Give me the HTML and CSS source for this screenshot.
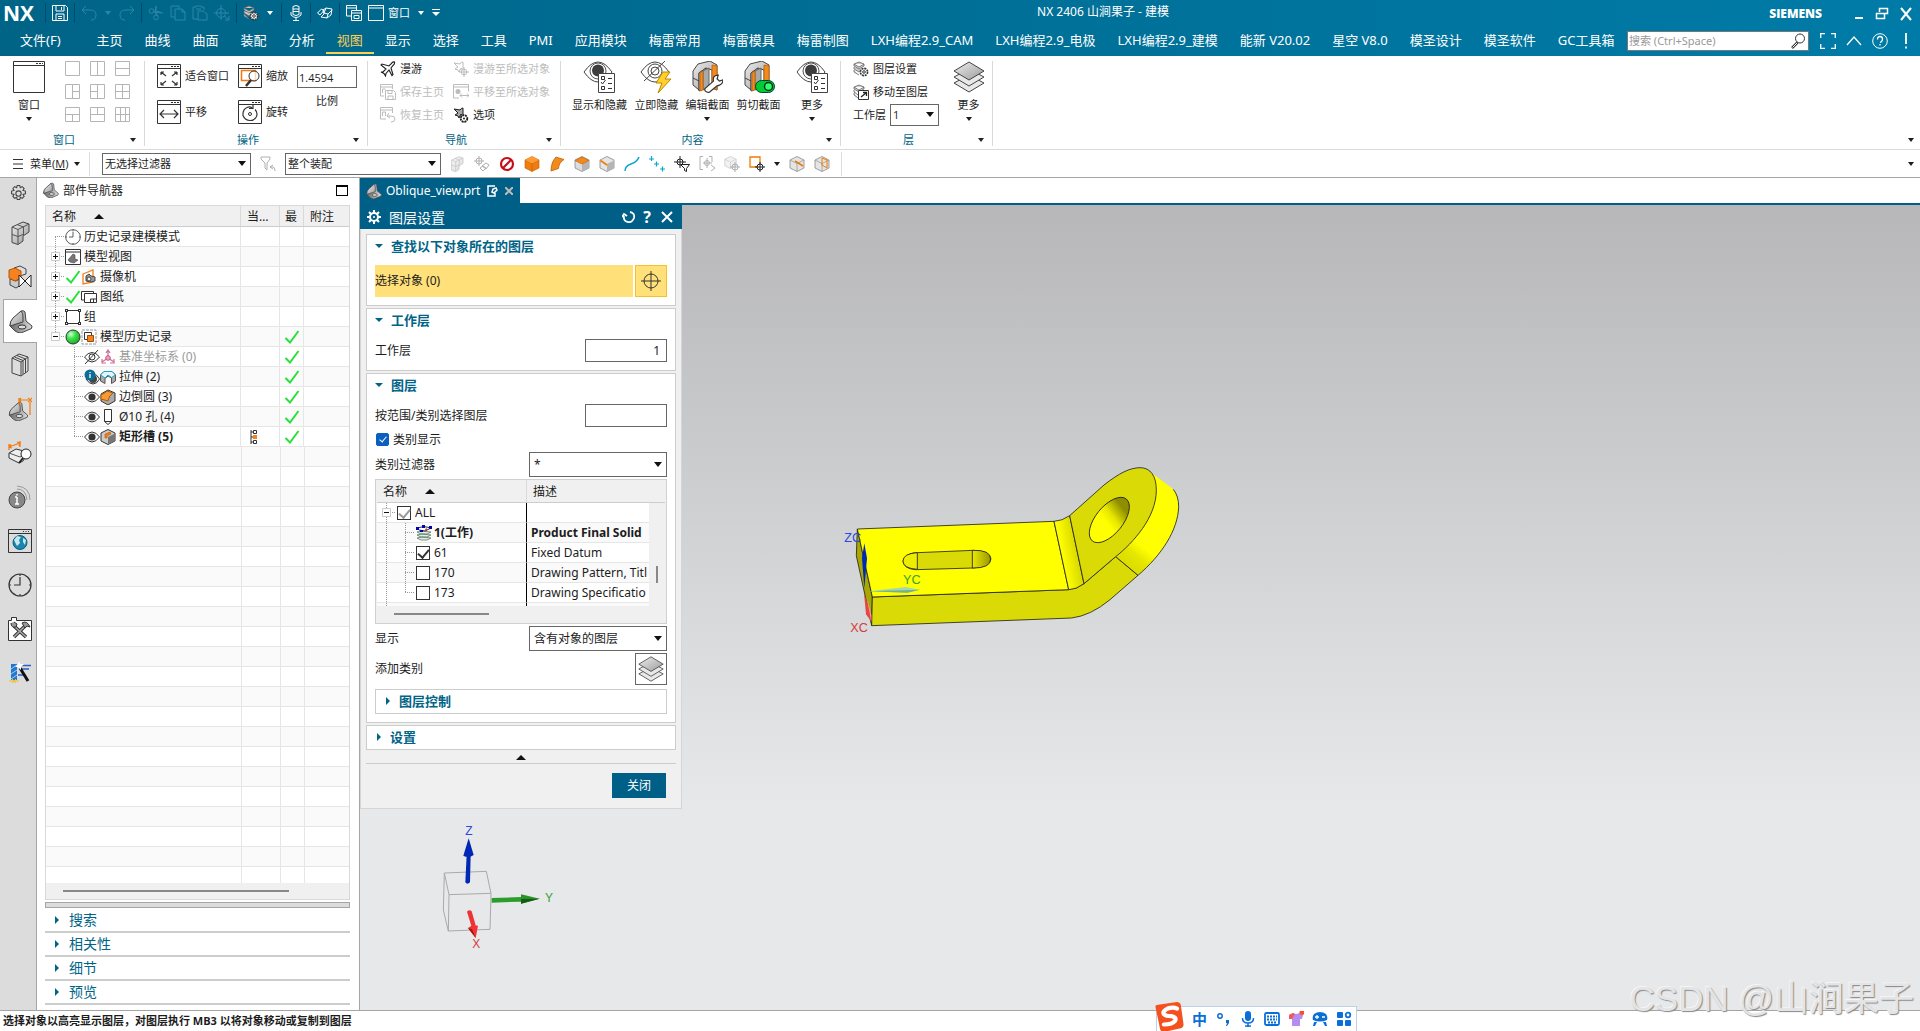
FILE: index.html
```html
<!DOCTYPE html>
<html lang="zh-CN">
<head>
<meta charset="utf-8">
<title>NX 2406 山涧果子 - 建模</title>
<link rel="stylesheet" href="styles.css">
</head>
<body>
<svg class="sprite" aria-hidden="true">
  <defs>
    <linearGradient id="gMetal" x1="0" y1="0" x2="1" y2="1"><stop offset="0" stop-color="#eee"/><stop offset="1" stop-color="#9a9a9a"/></linearGradient>
    <linearGradient id="gDark" x1="0" y1="0" x2="1" y2="0"><stop offset="0" stop-color="#666"/><stop offset="1" stop-color="#ddd"/></linearGradient>
    <radialGradient id="gGreen" cx=".35" cy=".3" r=".8"><stop offset="0" stop-color="#d6ffd6"/><stop offset=".4" stop-color="#3ee34a"/><stop offset="1" stop-color="#12a61d"/></radialGradient>
  </defs>
  <symbol id="save" viewBox="0 0 16 16"><path d="M.500.500h13l2 2v13H.500zM4 1v5h8V1M4 15V9h8v6M6 11.500h4M6 13.500h4M9.500 2v3" fill="none" stroke="currentColor"/></symbol>
  <symbol id="undo" viewBox="0 0 16 16"><path d="M5 1L1 5l4 4M1 5h8q6 0 6 5t-5 5" fill="none" stroke="currentColor"/></symbol>
  <symbol id="redo" viewBox="0 0 16 16"><path d="M11 1l4 4-4 4M15 5H7q-6 0-6 5t5 5" fill="none" stroke="currentColor"/></symbol>
  <symbol id="cut" viewBox="0 0 16 16"><g fill="none" stroke="currentColor"><circle cx="3.500" cy="6" r="2.300"/><circle cx="8" cy="12.500" r="2.300"/><path d="M5.500 7l9 1-6-2M8 10.500V1l-1 6 3 4"/></g></symbol>
  <symbol id="copy" viewBox="0 0 16 16"><path d="M5 12H1V1h8v3M5 4h7l3 3v8H5zM12 4v3h3" fill="none" stroke="currentColor"/></symbol>
  <symbol id="paste" viewBox="0 0 16 16"><path d="M6 14H1V2h3V1h5v1h3v3M6 6h5l4 3v6H6zM4 4h5" fill="none" stroke="currentColor"/></symbol>
  <symbol id="target" viewBox="0 0 16 16"><g fill="none" stroke="currentColor"><circle cx="7" cy="8" r="4.500"/><path d="M7 0v15M0 8h15M10 11l5 4M15 11v4h-4"/></g></symbol>
  <symbol id="layergear" viewBox="0 0 16 16"><path d="M1 3l5-2 5 2-5 3zM1 3v2l5 3 5-3V3M1 6v2l5 3 4-2M1 9v2l5 3" fill="#ccc" stroke="#666" stroke-width=".8"/><circle cx="11" cy="11" r="3.600" fill="#fff" stroke="#333" stroke-width="1.600" stroke-dasharray="2 .8"/><circle cx="11" cy="11" r="1.300" fill="none" stroke="#333"/></symbol>
  <symbol id="layermove" viewBox="0 0 16 16"><path d="M1 3l5-2 5 2-5 3zM1 3v2l5 3 5-3V3M1 6v2l4 3M1 9v2l4 3" fill="#ccc" stroke="#666" stroke-width=".8"/><path d="M5.500 6.500h10v9h-10z" fill="#fff" stroke="#333"/><path d="M8 13l5-4M10 8.500h3.500V12" fill="none" stroke="#222" stroke-width="1.300"/></symbol>
  <symbol id="mic" viewBox="0 0 16 16"><path d="M5 1.500q3-2 6 0v8q-3 2-6 0zM3 7v3q5 5 10 0V7M8 12v3M5 15.500h6M5 4h6M5 6.500h6" fill="none" stroke="currentColor"/></symbol>
  <symbol id="touch" viewBox="0 0 16 16"><path d="M.500 8l4-4 2.500 1.500L3 10zM6 5l3-2 6 1-1 6-4 3-6-1 3-3zM9 3l-2 5 4 1 4-4M11 9l-1 4" fill="none" stroke="currentColor"/></symbol>
  <symbol id="wins" viewBox="0 0 16 16"><path d="M5 11H.500V.500h10V5M.500 3h10M5.500 5.500h10v10h-10zM5.500 8h10M8 10.500h5v3H8z" fill="none" stroke="currentColor"/></symbol>
  <symbol id="win" viewBox="0 0 16 16"><path d="M.500.500h15v15H.500zM.500 3h15" fill="none" stroke="currentColor"/></symbol>
  <symbol id="bigwin" viewBox="0 0 32 32"><path d="M.500.500h31v31H.500zM.500 4.500h31" fill="#fff" stroke="#333"/><path d="M23 2.500h2M26 2.500h2M29 2.500h1" stroke="#333"/></symbol>
  <symbol id="frame" viewBox="0 0 24 24"><path d="M.500.500h23v23H.500zM.500 4.500h23" fill="none" stroke="#333"/><path d="M14 2.500h2M17 2.500h2M20 2.500h2" stroke="#333"/></symbol>
  <symbol id="l1" viewBox="0 0 15 15"><path d="M.500.500h14v14H.500z" fill="none" stroke="#b5b5b5"/></symbol>
  <symbol id="l2" viewBox="0 0 15 15"><path d="M.500.500h14v14H.500zM7.500 0v15" fill="none" stroke="#b5b5b5"/></symbol>
  <symbol id="l3" viewBox="0 0 15 15"><path d="M.500.500h14v14H.500zM0 7.500h15" fill="none" stroke="#b5b5b5"/></symbol>
  <symbol id="l4" viewBox="0 0 15 15"><path d="M.500.500h14v14H.500zM7.500 0v15M7.500 7.500H15" fill="none" stroke="#b5b5b5"/></symbol>
  <symbol id="l5" viewBox="0 0 15 15"><path d="M.500.500h14v14H.500zM7.500 0v15M0 7.500h7.500" fill="none" stroke="#b5b5b5"/></symbol>
  <symbol id="l6" viewBox="0 0 15 15"><path d="M.500.500h14v14H.500zM7.500 0v15M0 7.500h15" fill="none" stroke="#b5b5b5"/></symbol>
  <symbol id="l7" viewBox="0 0 15 15"><path d="M.500.500h14v14H.500zM0 7.500h15M7.500 7.500V15" fill="none" stroke="#b5b5b5"/></symbol>
  <symbol id="l8" viewBox="0 0 15 15"><path d="M.500.500h14v14H.500zM0 7.500h15M7.500 0v7.500" fill="none" stroke="#b5b5b5"/></symbol>
  <symbol id="l9" viewBox="0 0 15 15"><path d="M.500.500h14v14H.500zM0 7.500h15M5.500 0v15M10.500 0v15" fill="none" stroke="#b5b5b5"/></symbol>
  <symbol id="plane" viewBox="0 0 16 16"><path d="M14.500 1q-2-.500-3.500 2L9 5 2 3 1 4l5 4-3 3-2 0 3 1.500L5.500 15l.500-2.500L9 9l3 5.500 1-1L11 7l2-2.500Q15 3 14.500 1z" fill="#fff" stroke="currentColor" stroke-width="1.100"/></symbol>
  <symbol id="planemark" viewBox="0 0 16 16"><path d="M10 1Q8 1 7 3L1 2l4 4-3 2 3 1 1 2 2-4 2 3V5z" fill="#fff" stroke="currentColor"/><circle cx="11" cy="11" r="2.800" fill="#fff" stroke="currentColor"/><path d="M11 6v10M6 11h10" stroke="currentColor"/></symbol>
  <symbol id="planegear" viewBox="0 0 16 16"><path d="M10 1Q8 1 7 3L1 2l4 4-3 2 3 1 1 2 2-4 2 3V5z" fill="#aaa" stroke="currentColor"/><circle cx="11" cy="11.500" r="3.300" fill="#fff" stroke="currentColor" stroke-width="1.800" stroke-dasharray="2 .7"/><circle cx="11" cy="11.500" r="1" fill="currentColor"/></symbol>
  <symbol id="savehome" viewBox="0 0 16 16"><path d="M4 12H.500V.500h12V5M.500 3h12M2.500 9V5h3M5.500 6.500h8l2 2v7h-10zM8 6.500v3h4v-3M8 15v-3h5v3" fill="none" stroke="currentColor"/></symbol>
  <symbol id="restorehome" viewBox="0 0 16 16"><path d="M6 12H.500V.500h12V6M.500 3h12M2.500 9V5h3v4M9 6L7 9l3 2M7 9h4q4 0 4 3t-4 3" fill="none" stroke="currentColor"/></symbol>
  <symbol id="panobj" viewBox="0 0 16 16"><path d="M6 14H.500V.500h15v7M.500 3h15M7 11.500h9M9 9.500l-2 2 2 2M14 9.500l2 2-2 2" fill="none" stroke="currentColor"/><circle cx="5" cy="7.500" r="2.500" fill="currentColor"/></symbol>
  <symbol id="eyelist" viewBox="0 0 32 32"><path d="M1 11Q8 1 15 1t14 10Q22 21 15 21T1 11z" fill="#fff" stroke="#444"/><circle cx="15" cy="10" r="8" fill="#fff" stroke="#555"/><circle cx="15" cy="9.500" r="6" fill="#3d3d3d"/><path d="M15.500 12.500h16v19h-16z" fill="#fff" stroke="#444"/><path d="M18.500 15.500h3v3h-3zM18.500 25.500h3v3h-3z" fill="none" stroke="#333"/><path d="M18 21l1.500 2 3-4M25 17.500h4M25 22.500h4M25 27.500h4" fill="none" stroke="#333"/></symbol>
  <symbol id="eyebolt" viewBox="0 0 32 32"><path d="M1 11Q8 1 15 1t14 10Q22 21 15 21T1 11z" fill="#fff" stroke="#444"/><circle cx="15" cy="10" r="7" fill="none" stroke="#444"/><circle cx="15" cy="10" r="4" fill="none" stroke="#444"/><path d="M25 0L4 20" stroke="#444"/><path d="M23 11l-7 11h6l-4 10 13-14h-6l5-7z" fill="#ffd12e" stroke="#bd8500"/></symbol>
  <symbol id="section" viewBox="0 0 32 32"><path d="M2 10L7 3l12-3 7 4v25l-5-2V9l-6-2-7 5v17l-6-5z" fill="url(#gMetal)" stroke="#444"/><path d="M8 12l7-5v20l-7 3z" fill="#d3d3d3" stroke="#444"/><path d="M12 10l6-3v19l-6 3z" fill="#a9a9a9" stroke="#666"/><path d="M9 12l3-2v19l-3 1z" fill="#f28a1c" stroke="#b85a00" stroke-width=".7"/><path d="M21 4l5 1v24l-5-2z" fill="#f28a1c" stroke="#b85a00" stroke-width=".7"/><path d="M2 17l6 3" stroke="#444"/></symbol>
  <symbol id="wrench" viewBox="0 0 16 16"><path d="M2 15q-2-1-1-3l7-6q-1-5 4-5l-1 3 2 2 3-1q0 4-5 5l-6 5q-1 1-3 0z" fill="#fff" stroke="#333"/></symbol>
  <symbol id="layers" viewBox="0 0 32 32"><path d="M1 22l15 9 15-9-15-8z" fill="#e8e8e8" stroke="#444"/><path d="M1 16l15 9 15-9-15-8z" fill="#e8e8e8" stroke="#444"/><path d="M1 10l15 9 15-9L16 1z" fill="url(#gMetal)" stroke="#444"/></symbol>
  <symbol id="search" viewBox="0 0 16 16"><circle cx="10" cy="5.500" r="4.500" fill="none" stroke="currentColor"/><path d="M7.500 9.500L2 15" stroke="currentColor" stroke-width="2.500"/><path d="M7 10l-4.500 4.500" stroke="#fff"/></symbol>
  <symbol id="cubeO" viewBox="0 0 16 16"><path d="M1 4l7-3.500L15 4v8l-7 3.500L1 12z" fill="#ee7d10" stroke="#c35c00" stroke-width=".6"/><path d="M1 4l7 3.500L15 4M8 7.500v8" fill="none" stroke="#c35c00" stroke-width=".6"/><path d="M1 4l7-3.500L15 4 8 7.500z" fill="#ff9b33"/></symbol>
  <symbol id="faceO" viewBox="0 0 16 16"><path d="M2 15Q2 6 7 1l8 2.500q-5 3-5.500 9z" fill="#f38b1b" stroke="#b65500" stroke-width=".7"/></symbol>
  <symbol id="cubeT" viewBox="0 0 16 16"><path d="M1 4l7-3.500L15 4v8l-7 3.500L1 12z" fill="#ddd" stroke="#888" stroke-width=".8"/><path d="M8 8v7.500L15 12V4.500z" fill="#b5b5b5"/><path d="M1 4.500L8 1l7 3.500L8 8z" fill="#f58a18" stroke="#b85a00" stroke-width=".6"/></symbol>
  <symbol id="cubeE" viewBox="0 0 16 16"><path d="M1 4l7-3.500L15 4v8l-7 3.500L1 12z" fill="#e5e5e5" stroke="#888" stroke-width=".8"/><path d="M8 8v7.500L15 12V4.500z" fill="#b5b5b5"/><path d="M1.500 4.500L8 9" stroke="#f07c00" stroke-width="1.600"/></symbol>
  <symbol id="cubeG" viewBox="0 0 16 16"><path d="M1 4l7-3.500L15 4v8l-7 3.500L1 12z" fill="#e5e5e5" stroke="#888" stroke-width=".8"/><path d="M1 4l7 3.500L15 4M8 7.500v8" fill="none" stroke="#999" stroke-width=".8"/></symbol>
  <symbol id="bracket" viewBox="0 0 24 24"><path d="M12 2q3-1 4 1l1 9 6 5q1 3-4 4l-7 3q-3 0-6-2l-5-5q0-4 2-6z" fill="url(#gDark)" stroke="#444"/><path d="M12 2q2 2 2 6v5L1 17q0-5 3-8z" fill="url(#gMetal)" stroke="#444"/><ellipse cx="13" cy="18" rx="4" ry="2" fill="#ddd" stroke="#333"/></symbol>
  <symbol id="gear" viewBox="0 0 16 16"><circle cx="8" cy="8" r="2.500" fill="none" stroke="currentColor"/><path d="M6.800.500h2.400l.5 2.100 1.800-1.100 1.800 1.800-1.100 1.800 2.300.6v2.600l-2.300.6 1.100 1.900-1.800 1.700-1.800-1-.5 2.200H6.800l-.5-2.200-1.900 1-1.700-1.700 1.100-1.900-2.300-.6V5.700l2.300-.6-1.100-1.800 1.700-1.800 1.900 1.100z" fill="none" stroke="currentColor"/></symbol>
  <symbol id="blocks" viewBox="0 0 24 24"><path d="M4 6l11-5 6 2v8l-6 4v5l-5 3.500-6-2z" fill="url(#gMetal)" stroke="#444"/><path d="M4 6l6 2.500L21 3M10 8.500V23M4 13.500l6 2 5-2M15.500 6v8.500M9 3.500l6.500 2.500" fill="none" stroke="#555"/></symbol>
  <symbol id="constraint" viewBox="0 0 24 24"><path d="M6 3l6-2 6 3v5l-6 2z" fill="#ddd" stroke="#444"/><path d="M2 14l6 2 5-3v7l-5 3-6-3z" fill="#ccc" stroke="#444"/><path d="M1 5l6-2 6 3v7l-6 3-6-3z" fill="#f5821f" stroke="#b65500"/><path d="M11 10l12 12V10L11 22z" fill="#fff" stroke="#222"/></symbol>
  <symbol id="books" viewBox="0 0 24 24"><path d="M4 5l7-4 9 3v14l-7 5-9-3z" fill="#ddd" stroke="#444"/><path d="M13 9l7-5M13 9v14M4 5l9 4M6.500 4l8.500 3.500V21M9 2.500L17.500 6v14" fill="none" stroke="#444"/></symbol>
  <symbol id="dims" viewBox="0 0 24 24"><path d="M11 1v7M11 3h9M22 5v13M20 1l4 4M24 1l-4 4M13 1l-2 2 2 2" fill="none" stroke="#f27a0e" stroke-width="1.200"/></symbol>
  <symbol id="measure" viewBox="0 0 24 24"><path d="M1 12l7-4 12 3-5 9-4 2L1 17z" fill="#eee" stroke="#333"/><path d="M1 12l11 4 8-5" fill="none" stroke="#555"/><path d="M1 3v6M12 0v6M1 6l11-4M3 3.500L1 6l3 1M9 1l3 1-1 3" fill="none" stroke="#f27a0e" stroke-width="1.300"/><circle cx="18" cy="13" r="5" fill="#fff" stroke="#222"/><path d="M15 17l-4 5" stroke="#222" stroke-width="2"/></symbol>
  <symbol id="info" viewBox="0 0 24 24"><circle cx="9" cy="15" r="8" fill="#888" stroke="#444"/><path d="M9 12v7M7 12h2M7 19h4M9 9v1.500" stroke="#fff" stroke-width="1.500"/><path d="M9 4q9 0 10 11M9 1q13 1 13 14" fill="none" stroke="#999"/></symbol>
  <symbol id="web" viewBox="0 0 24 24"><path d="M.500.500h23v23H.500zM.500 4.500h23" fill="none" stroke="#333"/><path d="M15 2.500h7" stroke="#333" stroke-dasharray="1 1.500"/><circle cx="12" cy="13.500" r="7" fill="#1b86ad" stroke="#0b5c80"/><path d="M6 11l3-4 4 1-2 3 1 3-3 3zM15 9l3 2-1 5-2-3z" fill="#c6e8f0"/></symbol>
  <symbol id="clock" viewBox="0 0 24 24"><circle cx="12" cy="12" r="11" fill="none" stroke="#333" stroke-width="1.200"/><path d="M12 1v2M12 21v2M1 12h2M21 12h2M12 4v8H6" fill="none" stroke="#333" stroke-width="1.200"/></symbol>
  <symbol id="tools" viewBox="0 0 24 24"><path d="M.500 23.500V3.500h3v-3h5v3h15v20z" fill="#fff" stroke="#333"/><path d="M6 20L18 8M6 9l12 11" stroke="#333" stroke-width="3.500"/><path d="M6 20L18 8M6 9l12 11" stroke="#aaa" stroke-width="1.500"/><path d="M3 6q0 5 5 4l1-3-3-2M14 6q5-3 8 4l-3-1-2 2z" fill="#999" stroke="#333"/></symbol>
  <symbol id="wizard" viewBox="0 0 24 24"><path d="M3 3h6v16H3z" fill="#2277cf"/><path d="M3 8l6-4M3 13l6-4M3 18l6-4" stroke="#9cd0ff"/><path d="M11 4.500h12M13 8h8M10 14h7" stroke="#2762c5" stroke-width="1.500"/><path d="M12 7l8 13" stroke="#111" stroke-width="3"/><path d="M1 20h10M4 18l4 4M8 18l-4 4" stroke="#f5bc22"/><path d="M11 0l1 3 4 0-3 3 0 3-3-3-3 0 3-3z" fill="#fff"/></symbol>
  <symbol id="check" viewBox="0 0 16 16"><path d="M1.500 9l4.500 4.500L14.500 2" fill="none" stroke="#28e03a" stroke-width="2"/></symbol>
  <symbol id="mview" viewBox="0 0 16 16"><path d="M.500.500h15v15H.500zM.500 3h15" fill="#fff" stroke="#333"/><path d="M8 5l2 1v4l3 1-4 3-4-1-2-2z" fill="#777" stroke="#444" stroke-width=".6"/></symbol>
  <symbol id="camera" viewBox="0 0 16 16"><path d="M2 5l10-4v12L2 15z" fill="#fff" stroke="#f08019" stroke-width="1.300"/><path d="M5 7l3-2 2 2 4 1v4l-4 1-5-1z" fill="#999" stroke="#444"/><circle cx="8" cy="10" r="2" fill="#eee" stroke="#444"/></symbol>
  <symbol id="sheet" viewBox="0 0 16 16"><path d="M3 11H.500V2.500h12V4M3.500 4.500h12v9h-12zM9.500 13v-3h6M12.500 10v3" fill="#fff" stroke="#333"/></symbol>
  <symbol id="group" viewBox="0 0 16 16"><path d="M1.500 1.500h13v13h-13z" fill="none" stroke="#333"/><path d="M0 0h3v3H0zM13 0h3v3h-3zM0 13h3v3H0zM13 13h3v3h-3z" fill="#333"/><path d="M1 1h1v1H1zM14 1h1v1h-1zM1 14h1v1H1zM14 14h1v1h-1z" fill="#fff"/></symbol>
  <symbol id="ball" viewBox="0 0 16 16"><circle cx="8" cy="8" r="7" fill="url(#gGreen)" stroke="#333"/></symbol>
  <symbol id="history" viewBox="0 0 16 16"><path d="M1 1h14v14H1z" fill="#fff" stroke="#999" stroke-dasharray="3 1"/><path d="M3.500 3.500h7v7h-7z" fill="#fff" stroke="#333"/><path d="M6.500 6.500h6v6h-6z" fill="#f5821f" stroke="#a14e00"/></symbol>
  <symbol id="eyeoff" viewBox="0 0 16 16"><path d="M.500 8Q4 3.500 8 3.500T15.500 8Q12 13 8 13T.500 8z" fill="#fff" stroke="#333"/><circle cx="8" cy="8" r="3" fill="none" stroke="#333"/><path d="M14 1L1 15" stroke="#333"/></symbol>
  <symbol id="eye" viewBox="0 0 16 16"><path d="M.500 8Q4 3 8 3t7.500 5Q12 13 8 13T.500 8z" fill="#fff" stroke="#333"/><circle cx="8" cy="8" r="3.600" fill="#333"/></symbol>
  <symbol id="eyeinfo" viewBox="0 0 16 16"><path d="M2 10q3-5 7-5t6.500 5Q13 15 9 15t-7-5z" fill="#fff" stroke="#333"/><circle cx="9" cy="10" r="4" fill="#444"/><circle cx="6" cy="6" r="5.500" fill="#0c6e94"/><path d="M6 5v4M6 3v1" stroke="#fff" stroke-width="1.300"/></symbol>
  <symbol id="csys" viewBox="0 0 16 16"><path d="M8 1v9M8 9l-6 4M8 9l6 4M6 4l2-3 2 3M2 10v4h4M14 10v4h-4" fill="none" stroke="#d16b95" stroke-width="1.200"/><circle cx="8" cy="9" r="2.300" fill="#e6a5bf" stroke="#c65482"/></symbol>
  <symbol id="extrude" viewBox="0 0 16 16"><path d="M.500 6L4 2.500h8L15.500 6v6l-4 2.500V9L8 7 5 9.500v5L.500 12z" fill="#aaa" stroke="#555"/><path d="M.500 6L4 2.500h8L15.500 6l-4 2.500L8 6 5 9z" fill="#e4f5f9" stroke="#18a5c5"/></symbol>
  <symbol id="blend" viewBox="0 0 16 16"><path d="M1 5l7-4 7 3v8l-7 4-7-4z" fill="#aaa" stroke="#333"/><path d="M1 6q6-3 6-4l6 2q-4 2-5 8l-7-2z" fill="#f89a35" stroke="#b55a00"/></symbol>
  <symbol id="hole" viewBox="0 0 16 16"><path d="M4.500.500h7v12l-3.500 3-3.500-3zM4.500 12.500h7" fill="#fff" stroke="#333"/></symbol>
  <symbol id="slot" viewBox="0 0 16 16"><path d="M1 4l7-3.500L15 4v8l-7 3.500L1 12z" fill="#ccc" stroke="#333"/><path d="M8 8v7.500L15 12V4.500z" fill="#777"/><path d="M5 5l5-2 1 2-4 2 0 2-2 0z" fill="#f47b15" stroke="#b85a00" stroke-width=".6"/></symbol>
  <symbol id="current" viewBox="0 0 8 16"><path d="M1 1v14M1 3h2M1 8h2M1 13h2M3.500 1.500h3v3h-3zM3.500 11.500h3v3h-3z" fill="none" stroke="#333"/><path d="M3 6h4v4H3z" fill="#f5821f"/></symbol>
  <symbol id="minus" viewBox="0 0 9 9"><path d="M.500.500h8v8h-8z" fill="#fff" stroke="#ccc"/><path d="M2 4.500h5" stroke="#111"/></symbol>
  <symbol id="plus" viewBox="0 0 9 9"><path d="M.500.500h8v8h-8z" fill="#fff" stroke="#ccc"/><path d="M2 4.500h5M4.500 2v5" stroke="#111"/></symbol>
  <symbol id="worklayer" viewBox="0 0 16 16"><path d="M1 13l5-1 9 1-4 2-6 0zM1 10l5-1 9 1-4 2-6 0zM1 7l5-1 9 1-4 2-6 0z" fill="#e3eee5" stroke="#567a60" stroke-width=".8"/><path d="M1 3l7-1.500L15 3l-6 3-6-1z" fill="#fff" stroke="#333"/><path d="M0 2h3v3H0zM6 0h3v3H6zM13 1h3v3h-3zM4 5h3v2H4z" fill="#00b"/><path d="M9 5h3l-2-2" fill="#e22"/></symbol>
</svg>

<header class="top">
  <div class="quick">
    <strong class="nx">NX</strong><i class="vs"></i>
    <button aria-label="保存"><svg><use href="#save"/></svg></button><i class="vs"></i>
    <button class="off" aria-label="撤消"><svg><use href="#undo"/></svg></button><i class="caret off"></i>
    <button class="off" aria-label="重做"><svg><use href="#redo"/></svg></button><i class="vs"></i>
    <button class="off" aria-label="剪切"><svg><use href="#cut"/></svg></button>
    <button class="off" aria-label="复制"><svg><use href="#copy"/></svg></button>
    <button class="off" aria-label="粘贴"><svg><use href="#paste"/></svg></button>
    <button class="off" aria-label="定位"><svg><use href="#target"/></svg></button><i class="vs"></i>
    <button aria-label="图层"><svg><use href="#layergear"/></svg></button><i class="caret"></i><i class="vs"></i>
    <button aria-label="语音"><svg><use href="#mic"/></svg></button><i class="vs"></i>
    <button aria-label="触控"><svg><use href="#touch"/></svg></button><i class="vs"></i>
    <button aria-label="切换窗口"><svg><use href="#wins"/></svg></button>
    <button class="qwin"><svg><use href="#win"/></svg>窗口</button><i class="caret"></i>
    <button aria-label="自定义"><svg class="cfg" viewBox="0 0 8 8"><path d="M0 .500h8" stroke="#fff"/><path d="M0 3h8L4 7z" fill="#fff"/></svg></button>
  </div>
  <div class="title">NX 2406 山涧果子 - 建模</div>
  <div class="brand">
    <strong>SIEMENS</strong>
    <button aria-label="最小化"><svg viewBox="0 0 14 14"><path d="M4 11h8" stroke="#fff" stroke-width="2"/></svg></button>
    <button aria-label="还原"><svg viewBox="0 0 14 14"><path d="M4.500 5V1.500h8v5H10M1.500 6.500h8v5h-8z" fill="none" stroke="#fff" stroke-width="1.500"/></svg></button>
    <button aria-label="关闭窗口"><svg viewBox="0 0 14 14"><path d="M2 1l10 12M12 1L2 13" stroke="#fff" stroke-width="2"/></svg></button>
  </div>
</header>
<nav class="menu">
  <a class="file" href="#">文件(F)</a>
  <a href="#">主页</a><a href="#">曲线</a><a href="#">曲面</a><a href="#">装配</a><a href="#">分析</a><a class="on" href="#">视图</a><a href="#">显示</a><a href="#">选择</a><a href="#">工具</a><a href="#">PMI</a><a href="#">应用模块</a><a href="#">梅雷常用</a><a href="#">梅雷模具</a><a href="#">梅雷制图</a><a href="#">LXH编程2.9_CAM</a><a href="#">LXH编程2.9_电极</a><a href="#">LXH编程2.9_建模</a><a href="#">能新 V20.02</a><a href="#">星空 V8.0</a><a href="#">模圣设计</a><a href="#">模圣软件</a><a href="#">GC工具箱</a>
  <label class="find"><input type="text" placeholder="搜索 (Ctrl+Space)" aria-label="搜索"><svg><use href="#search"/></svg></label>
  <div class="helps">
    <button aria-label="全屏"><svg viewBox="0 0 16 16"><path d="M5 .700H.700V5M11 .700h4.300V5M5 15.300H.700V11M11 15.300h4.300V11" fill="none" stroke="#fff" stroke-width="1.300"/></svg></button>
    <button aria-label="折叠"><svg viewBox="0 0 16 16"><path d="M1 12l7-8 7 8" fill="none" stroke="#fff" stroke-width="1.300"/></svg></button>
    <button aria-label="帮助"><svg viewBox="0 0 16 16"><circle cx="8" cy="8" r="7.300" fill="none" stroke="#fff"/><path d="M5.500 6.500q0-3 2.500-3t2.500 2.500T8 9.500M8 11v1.500" fill="none" stroke="#fff" stroke-width="1.300"/></svg></button>
    <button aria-label="提示"><svg viewBox="0 0 16 16"><path d="M8 0v11M8 13.500v2" stroke="#fff" stroke-width="1.800"/></svg></button>
  </div>
</nav>

<section class="ribbon">
  <div class="grp g1">
    <div class="body">
      <button class="big"><svg><use href="#bigwin"/></svg>窗口<i class="caret"></i></button>
      <div class="lay"><svg><use href="#l1"/></svg><svg><use href="#l2"/></svg><svg><use href="#l3"/></svg><svg><use href="#l4"/></svg><svg><use href="#l5"/></svg><svg><use href="#l6"/></svg><svg><use href="#l7"/></svg><svg><use href="#l8"/></svg><svg><use href="#l9"/></svg></div>
    </div>
    <div class="cap"><span>窗口</span><i class="caret"></i></div>
  </div>
  <div class="grp g2">
    <div class="body">
      <div class="col c1">
        <button class="mid"><svg viewBox="0 0 24 24"><use href="#frame"/><path d="M4 8l5 4M4 8v3M4 8h3M20 8l-5 4M20 8v3M20 8h-3M4 21l5-4M4 21v-3M4 21h3M20 21l-5-4M20 21v-3M20 21h-3" fill="none" stroke="#333" stroke-width="1.200"/></svg>适合窗口</button>
        <button class="mid"><svg viewBox="0 0 24 24"><use href="#frame"/><path d="M3 14h18M7 10l-4 4 4 4M17 10l4 4-4 4" fill="none" stroke="#333" stroke-width="1.200"/></svg>平移</button>
      </div>
      <div class="col c2">
        <button class="mid"><svg viewBox="0 0 24 24"><use href="#frame"/><path d="M3.500 6.500h14v10h-14z" fill="none" stroke="#f27a0e" stroke-width="1.500"/><circle cx="16" cy="12" r="5" fill="#fff" fill-opacity=".7" stroke="#333"/><path d="M13 16l-5 6" stroke="#333" stroke-width="2.500"/></svg>缩放</button>
        <button class="mid"><svg viewBox="0 0 24 24"><use href="#frame"/><path d="M17 9.500q3 3 1.500 7-2 4-6.500 4-5 0-7-5-.500-6 4-8 3-1.500 5 .500M15 5v3.500h-4" fill="none" stroke="#333" stroke-width="1.200"/><circle cx="12" cy="14" r="1.500" fill="none" stroke="#333"/></svg>旋转</button>
      </div>
      <label class="ratio"><input type="text" value="1.4594">比例</label>
    </div>
    <div class="cap"><span>操作</span><i class="caret"></i></div>
  </div>
  <div class="grp g3">
    <div class="body">
      <div class="rows c3">
        <button class="sm"><svg><use href="#plane"/></svg>漫游</button>
        <button class="sm off" disabled><svg><use href="#savehome"/></svg>保存主页</button>
        <button class="sm off" disabled><svg><use href="#restorehome"/></svg>恢复主页</button>
      </div>
      <div class="rows">
        <button class="sm off" disabled><svg><use href="#planemark"/></svg>漫游至所选对象</button>
        <button class="sm off" disabled><svg><use href="#panobj"/></svg>平移至所选对象</button>
        <button class="sm"><svg><use href="#planegear"/></svg>选项</button>
      </div>
    </div>
    <div class="cap"><span>导航</span><i class="caret"></i></div>
  </div>
  <div class="grp g4">
    <div class="body">
      <button class="big wide"><svg><use href="#eyelist"/></svg>显示和隐藏</button>
      <button class="big"><svg><use href="#eyebolt"/></svg>立即隐藏</button>
      <button class="big"><svg viewBox="0 0 32 32"><use href="#section"/><use href="#wrench" x="13" y="13" width="19" height="19"/></svg>编辑截面<i class="caret"></i></button>
      <button class="big"><svg viewBox="0 0 32 32"><use href="#section"/><rect x="12.500" y="19.500" width="19" height="12" rx="6" fill="#0c3" stroke="#043"/><circle cx="25.500" cy="25.500" r="4" fill="#3f6" stroke="#032" stroke-width="1.500"/></svg>剪切截面</button>
      <button class="big last"><svg><use href="#eyelist"/></svg>更多<i class="caret"></i></button>
    </div>
    <div class="cap"><span>内容</span><i class="caret"></i></div>
  </div>
  <div class="grp g5">
    <div class="body">
      <div class="rows c5">
        <button class="sm"><svg><use href="#layergear"/></svg>图层设置</button>
        <button class="sm"><svg><use href="#layermove"/></svg>移动至图层</button>
        <label class="sm">工作层<span class="sel"><select><option>1</option></select></span></label>
      </div>
      <button class="big"><svg><use href="#layers"/></svg>更多<i class="caret"></i></button>
    </div>
    <div class="cap"><span>层</span><i class="caret"></i></div>
  </div>
  <i class="caret end"></i>
</section>

<section class="selbar">
  <button class="mbtn"><svg viewBox="0 0 10 10"><path d="M0 .500h10M0 5h10M0 9.500h10" stroke="#333"/></svg>菜单(<u>M</u>)<i class="caret"></i></button><i class="vs"></i>
  <span class="sel s1"><select aria-label="类型过滤器"><option>无选择过滤器</option></select></span>
  <svg class="mute ic" viewBox="0 0 16 16"><path d="M1 1h9v2L7 7v7l-2-2V7L1 3zM13 9l-3 2 3 2M10 11h3q2 0 2 4" fill="none" stroke="currentColor"/></svg>
  <span class="sel s2"><select aria-label="选择范围"><option>整个装配</option></select></span>
  <div class="tools">
    <svg class="faint" viewBox="0 0 24 24"><use href="#blocks"/></svg>
    <svg class="mute" viewBox="0 0 16 16"><g fill="none" stroke="currentColor"><circle cx="5" cy="5" r="3"/><path d="M5 0v10M0 5h10M8 10l4-3 3 2-3 4zM6 12l3-2 3 2-3 3z"/></g></svg>
    <svg viewBox="0 0 16 16"><circle cx="8" cy="8" r="6" fill="none" stroke="#c60d18" stroke-width="2.200"/><path d="M12 4l-8 8" stroke="#c60d18" stroke-width="2.200"/></svg>
    <svg><use href="#cubeO"/></svg>
    <svg><use href="#faceO"/></svg>
    <svg><use href="#cubeT"/></svg>
    <svg><use href="#cubeE"/></svg>
    <svg viewBox="0 0 16 16"><path d="M1 15q0-5 6-7t8-7" fill="none" stroke="#08a4cf" stroke-width="1.500"/></svg>
    <svg viewBox="0 0 16 16"><path d="M0 3h5M2.500 0v5M5 8h5M7.500 5.500v5M11 13h5M13.500 10.500v5" stroke="#08a4cf" stroke-width="1.200"/></svg>
    <svg viewBox="0 0 16 16"><g fill="none" stroke="#222"><circle cx="6" cy="6" r="3"/><path d="M6 0v12M0 6h12"/><path d="M6.500 8.500h9l-3 4v3l-2-1v-2z" fill="#fff"/></g></svg>
    <svg class="mute" viewBox="0 0 16 16"><g fill="none" stroke="currentColor"><path d="M4 .500H1v13h3M10 .500h3V6M12 9l4 3-4 3"/><circle cx="8" cy="7" r="2.500"/><path d="M8 2v10M4 7h9"/></g></svg>
    <svg class="mute" viewBox="0 0 16 16"><use href="#cubeG" width="13" height="13" opacity=".5"/><circle cx="11" cy="11" r="3" fill="none" stroke="currentColor"/><path d="M11 6v10M6 11h10" stroke="currentColor"/></svg>
    <svg viewBox="0 0 16 16"><path d="M1 1h10v10H1z" fill="none" stroke="#f07c00" stroke-width="1.300"/><circle cx="11" cy="11" r="3" fill="#fff" stroke="#222"/><path d="M11 6v10M6 11h10" stroke="#222"/></svg>
    <i class="caret"></i>
    <svg viewBox="0 0 16 16"><use href="#cubeG"/><path d="M6 5l8 5" stroke="#f07c00" stroke-width="1.500"/></svg>
    <svg viewBox="0 0 16 16"><use href="#cubeG"/><path d="M8 2l5 2v8l-5-3z" fill="none" stroke="#f07c00"/></svg>
  </div><i class="vs"></i>
  <i class="caret end"></i>
</section>

<main>
  <nav class="rail">
    <a class="g" href="#" aria-label="设置"><svg><use href="#gear"/></svg></a>
    <a href="#" aria-label="装配"><svg><use href="#blocks"/></svg></a>
    <a href="#" aria-label="约束"><svg><use href="#constraint"/></svg></a>
    <a class="on" href="#" aria-label="部件"><svg><use href="#bracket"/></svg></a>
    <a href="#" aria-label="重用库"><svg><use href="#books"/></svg></a>
    <a href="#" aria-label="尺寸"><svg viewBox="0 0 24 24"><use href="#bracket" y="4" width="21" height="20"/><use href="#dims"/></svg></a>
    <a href="#" aria-label="测量"><svg><use href="#measure"/></svg></a>
    <a href="#" aria-label="信息"><svg><use href="#info"/></svg></a>
    <a href="#" aria-label="浏览器"><svg><use href="#web"/></svg></a>
    <a href="#" aria-label="历史"><svg><use href="#clock"/></svg></a>
    <a href="#" aria-label="工具"><svg><use href="#tools"/></svg></a>
    <a href="#" aria-label="向导"><svg><use href="#wizard"/></svg></a>
  </nav>

  <aside class="part">
    <h2><svg><use href="#bracket"/></svg>部件导航器<i class="maxi"></i></h2>
    <div class="tree">
      <table>
        <colgroup><col><col class="k2"><col class="k3"><col class="k4"></colgroup>
        <thead><tr><th>名称<i class="up"></i></th><th>当…</th><th>最</th><th>附注</th></tr></thead>
        <tbody>
          <tr><td><div><b class="tw first"></b><svg><use href="#clock"/></svg><span>历史记录建模模式</span></div></td><td></td><td></td><td></td></tr>
          <tr><td><div><b class="tw"><svg><use href="#plus"/></svg></b><svg><use href="#mview"/></svg><span>模型视图</span></div></td><td></td><td></td><td></td></tr>
          <tr><td><div><b class="tw"><svg><use href="#plus"/></svg></b><svg><use href="#check"/></svg><svg><use href="#camera"/></svg><span>摄像机</span></div></td><td></td><td></td><td></td></tr>
          <tr><td><div><b class="tw"><svg><use href="#plus"/></svg></b><svg><use href="#check"/></svg><svg><use href="#sheet"/></svg><span>图纸</span></div></td><td></td><td></td><td></td></tr>
          <tr><td><div><b class="tw"><svg><use href="#plus"/></svg></b><svg><use href="#group"/></svg><span>组</span></div></td><td></td><td></td><td></td></tr>
          <tr><td><div><b class="tw last"><svg><use href="#minus"/></svg></b><svg><use href="#ball"/></svg><svg><use href="#history"/></svg><span>模型历史记录</span></div></td><td></td><td><svg><use href="#check"/></svg></td><td></td></tr>
          <tr class="dim"><td><div><b class="tw two"></b><svg><use href="#eyeoff"/></svg><svg><use href="#csys"/></svg><span>基准坐标系 (0)</span></div></td><td></td><td><svg><use href="#check"/></svg></td><td></td></tr>
          <tr><td><div><b class="tw two"></b><svg><use href="#eyeinfo"/></svg><svg><use href="#extrude"/></svg><span>拉伸 (2)</span></div></td><td></td><td><svg><use href="#check"/></svg></td><td></td></tr>
          <tr><td><div><b class="tw two"></b><svg><use href="#eye"/></svg><svg><use href="#blend"/></svg><span>边倒圆 (3)</span></div></td><td></td><td><svg><use href="#check"/></svg></td><td></td></tr>
          <tr><td><div><b class="tw two"></b><svg><use href="#eye"/></svg><svg><use href="#hole"/></svg><span>Ø10 孔 (4)</span></div></td><td></td><td><svg><use href="#check"/></svg></td><td></td></tr>
          <tr class="cur"><td><div><b class="tw two last"></b><svg><use href="#eye"/></svg><svg><use href="#slot"/></svg><span>矩形槽 (5)</span></div></td><td><svg><use href="#current"/></svg></td><td><svg><use href="#check"/></svg></td><td></td></tr>
        </tbody>
      </table>
      <div class="blank"></div>
      <div class="hbar"><i></i></div>
    </div>
    <div class="split"></div>
    <button class="fold">搜索</button>
    <button class="fold">相关性</button>
    <button class="fold">细节</button>
    <button class="fold">预览</button>
  </aside>

  <section class="stage">
    <div class="tabs"><div class="tab"><svg><use href="#bracket"/></svg>Oblique_view.prt<svg class="s" viewBox="0 0 12 12"><path d="M9 1H2v10h7V8M6 7l1-3 3-1 1 2-3 3z" fill="none" stroke="#fff" stroke-width="1.500"/></svg><button aria-label="关闭标签"><svg viewBox="0 0 8 8"><path d="M0 0l8 8M8 0L0 8" stroke="#bbb" stroke-width="2"/></svg></button></div></div>
    <div class="canvas">
      <svg class="model" viewBox="0 0 1200 660">
        <defs>
          <linearGradient id="rim" gradientUnits="userSpaceOnUse" x1="900" y1="370" x2="1070" y2="160"><stop offset="0" stop-color="#dada00"/><stop offset=".18" stop-color="#e6e600"/><stop offset=".3" stop-color="#ff0"/><stop offset="1" stop-color="#ff0"/></linearGradient>
          <linearGradient id="bore" gradientUnits="userSpaceOnUse" x1="860" y1="220" x2="925" y2="235"><stop offset="0" stop-color="#ff0"/><stop offset=".4" stop-color="#e6e600"/><stop offset="1" stop-color="#8e8e00"/></linearGradient>
          <linearGradient id="fold" gradientUnits="userSpaceOnUse" x1="725" y1="340" x2="770" y2="332"><stop offset="0" stop-color="#ff0"/><stop offset="1" stop-color="#dada00"/></linearGradient>
          <linearGradient id="slotEnd"><stop offset="0" stop-color="#ebe800"/><stop offset="1" stop-color="#999800"/></linearGradient>
        </defs>
        <g stroke="#222" stroke-width="2.500" stroke-linejoin="round">
          <path d="M112 267l-3 80 46 210 2-86z" fill="#a8a800"/>
          <path d="M157 471l589-22q22 0 46-18l95-81 67 56-84 73q-58 48-115 55l-600 23z" fill="#dada06"/>
          <path d="M112 267l590-23 44 205-589 22z" fill="#ff0"/>
          <path d="M702 244q24-1 47-17l43 204q-24 18-46 18z" fill="url(#fold)"/>
          <path d="M1000 103L1060 148Q1076 168 1076 200C1074 270 1025 345 954 406L887 350Z" fill="url(#rim)" stroke="none"/>
          <path d="M1060 148Q1076 168 1076 200C1074 270 1025 345 954 406L887 350" fill="none"/>
          <path d="M749 227L852 135C900 98 928 84 960 83C992 83 1009 108 1009 151C1009 232 939 309 887 350L792 431Z" fill="#dada06"/>
          <ellipse cx="868" cy="240" rx="81" ry="41" transform="rotate(-51 868 240)" fill="url(#bore)"/>
          <path d="M292 338h-5c-50 5-50 48 0 51l173-5c70-5 70-50 0-53z" fill="#dada06"/>
          <path d="M292 338q-43 3-43 25t43 25z" fill="#eded00"/>
          <path d="M457 331q55-2 55 26t-55 27z" fill="url(#slotEnd)"/>
        </g>
        <path d="M133 310l8 45-8 90-7-90z" fill="#0028b4"/>
        <path d="M145 454l112-13 43 8-38 9z" fill="#9edbae"/><path d="M145 454l155-5-38 9z" fill="#7cae82"/>
        <path d="M132 460l22 65v20l-16-22z" fill="#e64646"/><path d="M140 470l14 55v20z" fill="#f3a1a1"/>
        <g font-family="Liberation Sans, sans-serif" font-size="38"><text x="73" y="306" fill="#2d47e0">ZC</text><text x="249" y="433" fill="#34a234">YC</text><text x="91" y="575" fill="#d83b3b">XC</text></g>
      </svg>
      <svg class="triad" viewBox="0 0 480 480">
        <g fill="none" stroke="#aaa" stroke-width="3"><path d="M73 219l126-5 14 66-126 4zM87 284l-2 109 125-5 3-108M73 219l-3 111 15 63"/></g>
        <path d="M140 165l-4 82q6 8 14 0l2-82z" fill="#0028b4"/><path d="M146 115l15 50q-15 10-31 2z" fill="#0028b4"/>
        <path d="M215 294l88-3v14l-88 3z" fill="#2c9d2c"/><path d="M303 283l56 13-56 15z" fill="#289428"/><path d="M303 297l56-1-56 15z" fill="#145e14"/>
        <path d="M141 335q7-8 14-1l12 42-11 8z" fill="#e33"/><path d="M144 384q12-12 30-7l-7 37z" fill="#e33"/><path d="M144 384l12 4 11 26z" fill="#a11"/>
        <g font-family="Liberation Sans, sans-serif" font-size="36"><text x="136" y="105" fill="#2d47e0">Z</text><text x="375" y="305" fill="#34a234">Y</text><text x="157" y="443" fill="#d83b3b">X</text></g>
      </svg>
    </div>

    <div class="dlg">
      <div class="dhead"><svg viewBox="0 0 16 16"><path d="M8 1v14M1 8h14M3 3l10 10M13 3L3 13" stroke="#fff" stroke-width="2"/><circle cx="8" cy="8" r="4" fill="#005f87" stroke="#fff" stroke-width="2"/><circle cx="8" cy="8" r="1" fill="#fff"/></svg><h2>图层设置</h2>
        <button aria-label="重置"><svg viewBox="0 0 14 14"><path d="M8 2q5 1 4 6-2 5-6 4-5-1-4-6M0 7l2-3 3 2" fill="none" stroke="#fff" stroke-width="1.800"/></svg></button>
        <button class="q" aria-label="帮助">?</button>
        <button aria-label="关闭对话框"><svg viewBox="0 0 14 14"><path d="M2 2l10 10M12 2L2 12" stroke="#fff" stroke-width="2"/></svg></button></div>
      <div class="dbody">
        <section class="box">
          <h3>查找以下对象所在的图层</h3>
          <div class="pick"><span>选择对象 (0)</span><button aria-label="选择对象"><svg viewBox="0 0 22 22"><circle cx="11" cy="11" r="7" fill="none" stroke="#333"/><path d="M11 1v20M1 11h20" stroke="#333"/></svg></button></div>
        </section>
        <section class="box">
          <h3>工作层</h3>
          <label class="row"><span>工作层</span><input type="text" value="1"></label>
        </section>
        <section class="box">
          <h3>图层</h3>
          <label class="row"><span>按范围/类别选择图层</span><input type="text"></label>
          <label class="chk"><input type="checkbox" class="blue" checked>类别显示</label>
          <label class="row"><span>类别过滤器</span><span class="sel"><select><option>*</option></select></span></label>
          <div class="lt">
            <div class="ltwrap">
              <table>
                <colgroup><col class="n"><col><col class="v"></colgroup>
                <thead><tr><th>名称<i class="up"></i></th><th>描述</th><th></th></tr></thead>
                <tbody>
                  <tr><td><div><b class="tw all"><svg><use href="#minus"/></svg></b><input type="checkbox" class="part3" checked aria-label="ALL"><span>ALL</span></div></td><td></td><td></td></tr>
                  <tr class="cur"><td><div><b class="tw leaf"></b><svg><use href="#worklayer"/></svg><span>1(工作)</span></div></td><td>Product Final Solid</td><td></td></tr>
                  <tr><td><div><b class="tw leaf"></b><input type="checkbox" checked aria-label="61"><span>61</span></div></td><td>Fixed Datum</td><td></td></tr>
                  <tr><td><div><b class="tw leaf"></b><input type="checkbox" aria-label="170"><span>170</span></div></td><td>Drawing Pattern, Titl</td><td></td></tr>
                  <tr><td><div><b class="tw leaf last"></b><input type="checkbox" aria-label="173"><span>173</span></div></td><td>Drawing Specificatio</td><td></td></tr>
                  <tr class="tail"><td></td><td></td><td></td></tr>
                </tbody>
              </table>
              <i class="vthumb"></i>
            </div>
            <div class="hbar"><i></i></div>
          </div>
          <label class="row"><span>显示</span><span class="sel"><select><option>含有对象的图层</option></select></span></label>
          <div class="row"><span>添加类别</span><button class="add" aria-label="添加类别"><svg><use href="#layers"/></svg></button></div>
          <button class="box shut inner">图层控制</button>
        </section>
        <button class="box shut">设置</button>
        <div class="more"><i class="up"></i></div>
        <div class="foot"><button>关闭</button></div>
      </div>
    </div>
  </section>
</main>
<footer class="status">选择对象以高亮显示图层，对图层执行 MB3 以将对象移动或复制到图层</footer>

<div class="ime">
  <svg class="logo" viewBox="0 0 32 32"><path d="M1 5q0-2 3-2l20-3q3 0 4 3l3 21q0 3-3 4l-18 4q-3 0-4-3z" fill="#f4511e"/><path d="M24 7q-4-2-10 0-6 3-4 6 2 2 8 2 6 1 4 5-3 4-12 4" fill="none" stroke="#fff" stroke-width="4.500" stroke-linecap="round"/></svg>
  <b>中</b>
  <svg viewBox="0 0 16 16"><circle cx="4" cy="5" r="2.200" fill="none" stroke="#0a6ed8" stroke-width="1.500"/><path d="M10 9h3v3l-2 3h-1l1-3h-1z" fill="#0a6ed8"/></svg>
  <svg viewBox="0 0 16 16"><rect x="5" y="0" width="6" height="10" rx="3" fill="#0a6ed8"/><path d="M2.500 7q0 5 5.500 5t5.500-5M8 12v4M5 15h6" fill="none" stroke="#0a6ed8" stroke-width="1.500"/></svg>
  <svg viewBox="0 0 16 16"><rect x="1" y="2" width="14" height="12" rx="1.500" fill="none" stroke="#0a6ed8" stroke-width="1.800"/><path d="M3 5.500h10M3 8.500h10M4 11.500h8" stroke="#0a6ed8" stroke-width="2" stroke-dasharray="2 1"/></svg>
  <svg viewBox="0 0 16 16"><path d="M1 4l4-2q3 2 6 0l4 2-1 4-2 0v7H4V8L1 8z" fill="#b58cf0"/><path d="M1 4l4-2 2 1-3 5H1z" fill="#f0595f"/><circle cx="14" cy="1.500" r="2.500" fill="#ff4b2b"/></svg>
  <svg viewBox="0 0 16 16"><path d="M2 3q6-4 12 0 2 3 1 6-7 3-14 0-1-3 1-6zM2 11h3l-2 4H1zM14 11h-3l2 4h2z" fill="#0a6ed8"/><path d="M3 6h4M5 4v4M10 6h3" stroke="#fff" stroke-width="1.300"/></svg>
  <svg viewBox="0 0 16 16"><rect x="1" y="1" width="6" height="6" rx="1" fill="#0a6ed8"/><circle cx="12" cy="4" r="2.300" fill="none" stroke="#0a6ed8" stroke-width="1.800"/><rect x="1" y="9" width="6" height="6" rx="1" fill="#0a6ed8"/><rect x="9" y="9" width="6" height="6" rx="1" fill="#0a6ed8"/></svg>
</div>
<div class="mark">CSDN @山涧果子</div>
</body>
</html>
```
FILE: styles.css
```css
* { box-sizing: border-box; }
body {
  margin: 0; min-height: 100vh; display: flex; flex-direction: column; position: relative;
  font: 11px/16px "Open Sans", "Noto Sans CJK SC", sans-serif; color: #1c1c1c; background: #fff;
}
button, input, select { font: inherit; color: inherit; margin: 0; padding: 0; border: 0; background: none; border-radius: 0; }
h2, h3 { margin: 0; }
a { color: inherit; text-decoration: none; }
svg { display: block; flex: none; width: 16px; height: 16px; }
.sprite { position: absolute; width: 0; height: 0; }
select, input { outline: 0; }

.caret { flex: none; width: 0; height: 0; border: 3px solid transparent; border-top: 4px solid currentColor; border-bottom: 0; }
.up { display: inline-block; border: 5px solid transparent; border-bottom: 5px solid #111; border-top: 0; }
.vs { flex: none; width: 1px; background: #ddd; align-self: stretch; }
.sel { display: flex; align-items: center; border: 1px solid #666; background: #fff; }
.sel select { appearance: none; flex: 1; min-width: 0; align-self: stretch; padding: 0 2px; }
.sel::after { content: ""; border: 4px solid transparent; border-top: 5px solid #111; border-bottom: 0; margin: 0 4px 0 -14px; pointer-events: none; }

/* title bar */
.top, .menu { background: linear-gradient(90deg, #006487, #007ba7); color: #fff; display: flex; }
.top { height: 28px; align-items: center; justify-content: space-between; }
.quick { display: flex; align-items: center; gap: 6px; flex: 1 1 0; padding: 0 0 2px 3px; height: 28px; }
.quick .vs { background: #004c68; height: 20px; align-self: center; }
.quick .off { color: #2a87a8; }
.quick .caret { margin: 0 2px; }
.cfg { width: 8px; height: 8px; }
.nx { font: bold 21px/22px "Open Sans", sans-serif; width: 36px; }
.qwin { display: flex; align-items: center; gap: 4px; }
.title { font: 12px/24px "Noto Sans", "Noto Sans CJK SC", sans-serif; margin: 0 0 4px 290px; }
.brand { flex: 1 1 0; display: flex; justify-content: flex-end; align-items: center; gap: 10px; padding-right: 7px; }
.brand strong { font: 800 12px/16px "Open Sans", sans-serif; margin-right: 19px; }
.brand svg { width: 14px; height: 14px; }

/* menu tabs */
.menu { height: 28px; font: 13px/20px "Noto Sans", "Noto Sans CJK SC", sans-serif; padding-left: 9px; }
.menu a { padding: 2px 11px 0; height: 26px; white-space: nowrap; }
.menu a.file { margin-right: 14px; }
.menu a.on { color: #ffce54; border-bottom: 2px solid #ffce54; }
.find { display: flex; align-items: center; flex: 0 1 178px; margin: 3px 11px 5px auto; background: #fff; border: 1px solid #777; font: 11px/16px "Noto Sans", "Noto Sans CJK SC", sans-serif; }
.find input { flex: 1; min-width: 0; padding: 0 1px; color: #333; }
.find input::placeholder { color: #999; opacity: 1; }
.find svg { margin: 0 2px; color: #333; }
.helps { display: flex; gap: 10px; padding: 5px 6px 0 0; align-items: flex-start; }

/* ribbon */
.ribbon { display: flex; height: 94px; padding-top: 5px; border-bottom: 1px solid #d9d9d9; }
.grp { display: flex; flex-direction: column; border-right: 1px solid #d9d9d9; height: 85px; }
.g1 { width: 145px; } .g2 { width: 223px; } .g3 { width: 193px; } .g4 { width: 280px; } .g5 { width: 152px; }
.body { display: flex; flex: 1; min-height: 0; }
.cap { display: flex; align-items: center; height: 12px; line-height: 12px; color: #006487; }
.cap span { flex: 1; text-align: center; }
.cap .caret { color: #222; margin: 0 8px 0 2px; }
.big { display: flex; flex-direction: column; align-items: center; justify-content: flex-start; width: 52px; line-height: 24px; height: 66px; }
.big svg { width: 32px; height: 32px; }
.g1 .big { width: 58px; }
.big.wide { width: 64px; }
.big.last { width: 57px; }
.lay { display: grid; grid-template-columns: repeat(3, 15px); gap: 8px 10px; align-content: start; margin-left: 7px; }
.lay svg { width: 15px; height: 15px; }
.g2 .body { padding-left: 12px; }
.col { display: flex; flex-direction: column; gap: 12px; padding-top: 3px; }
.c1 { width: 81px; } .c2 { width: 59px; }
.mid { display: flex; align-items: center; gap: 4px; white-space: nowrap; }
.mid svg { width: 24px; height: 24px; }
.ratio { display: flex; flex-direction: column; align-items: center; gap: 5px; padding-top: 5px; width: 60px; }
.ratio input { width: 60px; height: 22px; border: 1px solid #666; padding: 0 1px; }
.g3 .body, .g5 .body { padding-left: 12px; }
.rows { display: flex; flex-direction: column; margin-top: -4px; }
.c3 { width: 73px; }
.sm { display: flex; align-items: center; gap: 4px; height: 23px; white-space: nowrap; }
.sm.off { color: #bcbcbc; }
.c5 { width: 86px; margin-right: 6px; }
.sm .sel { width: 49px; height: 22px; }
.end { margin: auto 6px 7px auto; }
.g4 .body { padding-left: 7px; }

/* selection bar */
.selbar { display: flex; height: 28px; border-bottom: 1px solid #a5a5a5; align-items: center; padding-left: 13px; }
.selbar .vs { height: 24px; align-self: center; }
.mbtn { display: flex; align-items: center; white-space: nowrap; width: 76px; }
.mbtn svg { width: 10px; height: 10px; margin-right: 7px; }
.mbtn .caret { margin-left: 6px; }
.selbar .sel { height: 22px; }
.s1 { width: 149px; margin-left: 12px; }
.ic { margin: 0 9px; }
.s2 { width: 156px; }
.tools { display: flex; align-items: center; gap: 9px; padding: 0 11px 0 8px; }
.mute { color: #b0b0b0; }
.faint { opacity: .35; }
.selbar .end { margin: 0 6px 0 auto; }

/* body */
main { flex: 1; display: flex; min-height: 0; }
.rail { width: 37px; background: #dcdcdc; border-right: 1px solid #a5a5a5; }
.rail a { display: flex; align-items: center; justify-content: center; height: 44px; padding-left: 3px; }
.rail svg { width: 24px; height: 24px; }
.rail .g { height: 33px; color: #444; padding: 0 0 2px; }
.rail .g svg { width: 17px; height: 17px; }
.rail .on { background: #fff; border: 1px solid #a5a5a5; border-right: 0; margin: 0 -1px 0 3px; padding: 0; }

.part { width: 323px; padding: 0 9px 5px 8px; border-right: 1px solid #a5a5a5; display: flex; flex-direction: column; background: #fff; }
.part h2 { font: 12px/24px "Noto Sans CJK SC", sans-serif; display: flex; align-items: center; gap: 4px; margin: 0 2px 3px -2px; }
.maxi { width: 12px; height: 11px; border: 1px solid #000; border-top-width: 2px; margin-left: auto; }
.tree { border: 1px solid #d9d9d9; flex: 1; display: flex; flex-direction: column; font: 12px/19px "Noto Sans", "Noto Sans CJK SC", sans-serif; }
table { border-collapse: separate; border-spacing: 0; table-layout: fixed; width: 100%; }
.k2 { width: 39px; } .k3 { width: 24px; } .k4 { width: 45px; }
th { font-weight: normal; text-align: left; background: #f0f0f0; height: 21px; padding: 0 0 0 6px; border-bottom: 1px solid #ccc; border-right: 1px solid #d9d9d9; white-space: nowrap; }
th .up { margin: 0 0 2px 18px; }
.tree th:nth-child(3) { padding-left: 5px; }
td { height: 20px; padding: 0; border-bottom: 1px solid #e6e6e6; border-right: 1px solid #e6e6e6; white-space: nowrap; overflow: hidden; }
th:last-child, td:last-child { border-right: 0; }
tbody tr:nth-child(even) { background: #fafafa; }
td > div { display: flex; align-items: center; height: 19px; }
td > svg { margin: 0 auto; }
.tree td:nth-child(2) svg { margin-left: 5px; }
td span { margin-left: 3px; }
.dim span { color: #999; }
.cur { font-weight: bold; }
.tw { align-self: stretch; flex: none; display: flex; align-items: center; width: 19px; padding-left: 5px;
  --v: repeating-linear-gradient(#999 0 1px, transparent 1px 2px);
  --h: repeating-linear-gradient(90deg, #999 0 1px, transparent 1px 2px);
  background: var(--v) 9px 0/1px 100% no-repeat, var(--h) 9px 9px/9px 1px no-repeat; }
.tw svg { width: 9px; height: 9px; }
.tw.first { background-position: 9px 10px, 9px 9px; }
.tw.last { background-size: 1px 10px, 9px 1px; }
.tw.two { width: 38px; background-position: 28px 0, 28px 9px; }
.blank { flex: 1; min-height: 60px;
  background:
    linear-gradient(#e6e6e6, #e6e6e6) 195px 0/1px 100% no-repeat,
    linear-gradient(#e6e6e6, #e6e6e6) 234px 0/1px 100% no-repeat,
    linear-gradient(#e6e6e6, #e6e6e6) 258px 0/1px 100% no-repeat,
    repeating-linear-gradient(#fafafa 0 19px, #e6e6e6 19px 20px, #fff 20px 39px, #e6e6e6 39px 40px); }
.hbar { height: 16px; background: #f0f0f0; padding: 7px 60px 0 17px; }
.hbar i { display: block; height: 2px; background: #888; }
.split { height: 6px; margin: 2px 0 1px; background: #dcdcdc; border: 1px solid #a5a5a5; }
.fold { height: 24px; border-bottom: 2px solid #ccc; text-align: left; color: #006487; font-size: 14px; line-height: 22px; display: flex; align-items: center; gap: 10px; padding-left: 10px; }
.fold::before, .shut::before { content: ""; border: 4px solid transparent; border-left: 4px solid #006487; border-right: 0; }

.stage { flex: 1; display: flex; flex-direction: column; position: relative; min-width: 0; }
.tabs { height: 27px; border-bottom: 2px solid #005f87; background: #fff; display: flex; }
.tab { background: #005f87; color: #fff; width: 160px; display: flex; align-items: center; padding-left: 6px; gap: 4px; font: 12px/24px "Noto Sans", sans-serif; }
.tab .s { width: 12px; height: 12px; margin: 0 3px 0 2px; }
.tab button svg { width: 8px; height: 8px; }
.canvas { flex: 1; background: linear-gradient(#b7b7b9, #c9cacc 29%, #dcddde 57%, #e6e8ea 75%); position: relative; }
.model { position: absolute; left: 460px; top: 235px; width: 400px; height: 220px; }
.triad { position: absolute; left: 60px; top: 595px; width: 160px; height: 160px; }

/* layer settings dialog */
.dlg { position: absolute; left: 0; top: 25px; width: 322px; background: #f0f0f0; border: solid #d5d5d5; border-width: 0 1px 1px; font: 12px/20px "Noto Sans", "Noto Sans CJK SC", sans-serif; }
.dhead { height: 26px; margin: 0 -1px; background: #005f87; color: #fff; display: flex; align-items: center; padding: 2px 8px 0 6px; gap: 6px; }
.dhead h2 { font: 14px/20px "Noto Sans CJK SC", sans-serif; flex: 1; margin-left: 1px; }
.dhead button svg { width: 14px; height: 14px; }
.dhead .q { font: bold 16px/20px "Noto Sans", sans-serif; padding: 0 3px 0 1px; }
.dbody { padding: 5px 5px 10px; display: flex; flex-direction: column; gap: 2px; }
.box { background: #fff; border: 1px solid #ccc; padding: 0 8px 8px; display: flex; flex-direction: column; gap: 2px; }
.box h3 { font: bold 13px/22px "Noto Sans CJK SC", sans-serif; color: #006487; display: flex; align-items: center; gap: 8px; margin-bottom: 6px; }
.box h3::before { content: ""; border: 4px solid transparent; border-top: 4px solid #006487; border-bottom: 0; }
.pick { display: flex; gap: 2px; }
.pick span { flex: 1; background: #ffe079; line-height: 32px; }
.pick button { width: 32px; height: 32px; background: #ffe079; border: 1px solid #fbbf2d; display: grid; place-items: center; }
.pick svg { width: 22px; height: 22px; }
.row { display: flex; justify-content: space-between; align-items: center; }
.row input { width: 82px; height: 23px; border: 1px solid #666; text-align: right; padding-right: 6px; }
.row .sel { width: 138px; height: 25px; }
.row .sel select { padding-left: 4px; }
.chk { display: flex; align-items: center; height: 21px; gap: 4px; }
input[type=checkbox] { appearance: none; width: 14px; height: 14px; border: 1px solid #333; background: #fff; display: grid; place-items: center; flex: none; }
input[type=checkbox]:checked::before { content: ""; width: 5px; height: 9px; border: solid #333; border-width: 0 2px 2px 0; transform: rotate(40deg); margin-bottom: 2px; }
input.blue[type=checkbox] { width: 13px; height: 13px; margin-left: 1px; background: #0a5fbf; border-color: #0a5fbf; border-radius: 2px; }
input.blue[type=checkbox]:checked::before { width: 3px; height: 6px; border-color: #fff; border-width: 0 1px 1px 0; }
input.part3[type=checkbox]:checked::before { border-color: #999; }
.lt { border: 1px solid #d0d0d0; padding: 0 1px; height: 145px; background: #f0f0f0; }
.ltwrap { position: relative; height: 126px; overflow: hidden; }
.lt .n { width: 150px; } .lt .v { width: 16px; }
.lt th { height: 22px; padding-top: 2px; }
.lt th:nth-child(2) { border-right: 0; }
.lt tbody tr { background: #fff; }
.lt tbody tr:nth-child(even) { background: #fafafa; }
.lt td:first-child { border-right: 1px solid #000; background: repeating-linear-gradient(#999 0 1px, transparent 1px 2px) 9px 0/1px 100% no-repeat; }
.lt td:nth-child(2) { border-right: 0; padding-left: 4px; line-height: 19px; }
.lt td:last-child { background: #f0f0f0; border: 0; }
.tw.all { width: 20px; background: var(--h) 9px 9px/10px 1px no-repeat; }
.tw.leaf { width: 39px; background-position: 28px 0, 28px 9px; }
.lt td span { margin-left: 4px; }
.lt td svg + span { margin-left: 2px; }
.vthumb { position: absolute; right: 7px; top: 86px; width: 2px; height: 17px; background: #888; }
.lt .hbar { padding: 7px 176px 0 17px; }
.row .add { width: 32px; height: 32px; border: 1px solid #666; display: grid; place-items: center; }
.add svg { width: 26px; height: 26px; }
.shut { flex-direction: row; align-items: center; height: 25px; padding: 0 10px 1px; gap: 9px; color: #006487; font: bold 13px/22px "Noto Sans CJK SC", sans-serif; }
.inner { margin-top: 2px; }
.more { height: 12px; border-bottom: 1px solid #ccc; display: flex; align-items: center; justify-content: center; }
.foot { display: flex; justify-content: flex-end; padding: 7px 10px 0 0; }
.foot button { width: 54px; height: 25px; background: #005f87; color: #fff; }

.status { height: 21px; border-top: 1px solid #a5a5a5; font-weight: bold; line-height: 20px; padding-left: 3px; background: #fff; }
.ime { position: absolute; left: 1156px; bottom: 0; height: 25px; width: 201px; background: #fff; border: 1px solid #bcd0ea; border-bottom: 0; display: flex; align-items: center; gap: 8px; color: #0a6ed8; }
.ime .logo { width: 31px; height: 30px; margin: -5px -1px 0 -3px; }
.ime b { font-size: 15px; width: 16px; }
.mark { position: absolute; right: 6px; bottom: 8px; font: 35px/48px "Liberation Sans", "Noto Sans CJK SC", sans-serif; color: #e4e4e6; text-shadow: 1px 1px 1px #888, -1px -1px 0 #f5f5f5; white-space: nowrap; }
```
